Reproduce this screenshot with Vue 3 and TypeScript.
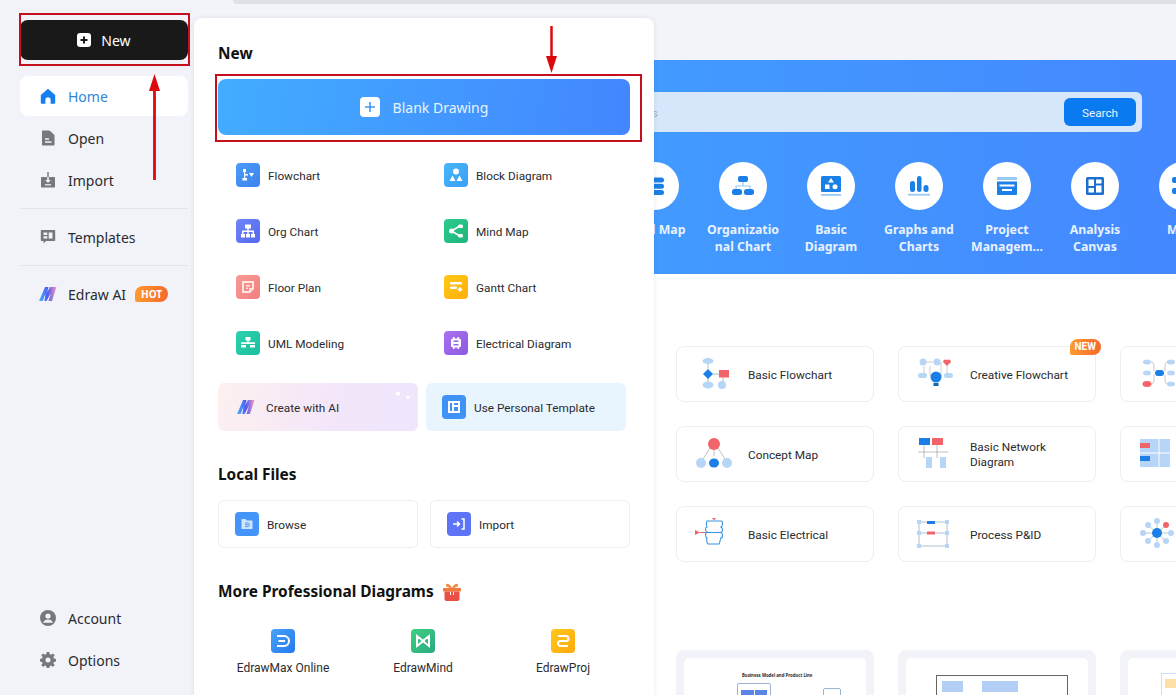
<template>
  <div class="page">
    <aside class="side">
      <button class="new-btn">
        <svg width="14" height="14" viewBox="0 0 14 14"><rect width="14" height="14" rx="3" fill="#fff" /><path d="M7 3.500v7M3.500 7h7" stroke="#191919" stroke-width="2" /></svg>
        New
      </button>
      <nav class="nav">
        <div class="nav-item active">
          <svg width="16" height="16" viewBox="0 0 16 16"><path d="M8 .8 15.200 7v8a.8.8 0 0 1-.8.8H10.600v-4a2.600 2.600 0 0 0-5.200 0v4H1.600a.8.8 0 0 1-.8-.8V7z" fill="#1480f0" /></svg>
          Home
        </div>
        <div class="nav-item">
          <svg width="16" height="16" viewBox="0 0 16 16"><path d="M2 1.500C2 .9 2.400.5 3 .5h6.500L14.500 5v9.500c0 .6-.4 1-1 1H3c-.6 0-1-.4-1-1z" fill="#77787d" /><path d="M5 9h4M5 12h6.500" stroke="#f1f3f9" stroke-width="1.400" /></svg>
          Open
        </div>
        <div class="nav-item">
          <svg width="16" height="16" viewBox="0 0 16 16"><path d="M1 6c0-.6.4-1 1-1h12c.6 0 1 .4 1 1v8.500c0 .6-.4 1-1 1H2c-.6 0-1-.4-1-1z" fill="#77787d" /><path d="M7.200 5h1.600v3h2L8 11 5.200 8h2z" fill="#f1f3f9" /><path d="M7.300 0h1.400v5H7.300z" fill="#77787d" /><path d="M5 12.800h6" stroke="#f1f3f9" stroke-width="1.200" /></svg>
          Import
        </div>
        <hr class="rule" />
        <div class="nav-item">
          <svg width="16" height="16" viewBox="0 0 16 16"><path d="M1.500 1h13c.4 0 .7.3.7.7v9.600c0 .4-.3.7-.7.7H6l-2.500 2.600V12h-2c-.4 0-.7-.3-.7-.7V1.700c0-.4.3-.7.7-.7z" fill="#77787d" /><path d="M3.500 3.500h3.800v2.600H3.500zM3.500 7.200h3.800v2.400H3.500zM8.700 3.500h3.800v6.100H8.700z" fill="#f1f3f9" /></svg>
          Templates
        </div>
        <hr class="rule" />
        <div class="nav-item ai-item">
          <svg width="18" height="16" viewBox="0 0 18 16"><defs><linearGradient id="aiSide" x1="0" x2="1"><stop offset="0" stop-color="#45b4ff" /><stop offset=".5" stop-color="#4f5cf2" /><stop offset="1" stop-color="#f89ac0" /></linearGradient></defs><path d="M0 15 6 1h3.600L8 6.500 11 1h6.500L13 15H9.500l2.500-8-4.500 8H5.300L6.500 7.500 3.600 15z" fill="url(#aiSide)" /></svg>
          <span>Edraw AI</span>
          <span class="hot">HOT</span>
        </div>
      </nav>
      <div class="side-bottom">
        <div class="nav-item">
          <svg width="16" height="16" viewBox="0 0 16 16"><circle cx="8" cy="8" r="8" fill="#77787d" /><circle cx="8" cy="6" r="2.600" fill="#f1f3f9" /><path d="M3.200 12.800c.6-2.200 2.600-3.200 4.800-3.200s4.200 1 4.800 3.200z" fill="#f1f3f9" /></svg>
          Account
        </div>
        <div class="nav-item">
          <svg width="16" height="16" viewBox="0 0 16 16"><path fill-rule="evenodd" d="M6.700 0h2.600l.4 2.200 1.300.6 1.900-1.300 1.800 1.800-1.300 1.900.6 1.300 2 .4v2.600l-2 .4-.6 1.300 1.300 1.900-1.800 1.800-1.900-1.300-1.300.6-.4 2.200H6.700l-.4-2.200-1.300-.6-1.900 1.300-1.800-1.800 1.300-1.900-.6-1.300-2-.4V6.900l2-.4.600-1.300L1.300 3.300l1.800-1.800L5 2.800l1.300-.6zM8 5.500a2.500 2.500 0 1 0 0 5 2.500 2.500 0 0 0 0-5z" fill="#77787d" /></svg>
          Options
        </div>
      </div>
    </aside>

    <main class="main">
      <div class="top"><div class="top-strip"></div></div>
      <section class="banner">
        <div class="search">
          <span class="placeholder">Search templates</span>
          <button class="search-btn">Search</button>
        </div>
        <div class="cats">
          <div v-for="c in categories" :key="c.name" class="cat">
            <div class="cat-circle">
              <svg width="24" height="24" viewBox="0 0 24 24" v-html="c.icon"></svg>
            </div>
            <div class="cat-name">{{ c.name }}</div>
          </div>
        </div>
      </section>

      <section class="cards">
        <div v-for="(card, i) in cards" :key="i" class="card">
          <svg class="card-icon" width="40" height="32" viewBox="0 0 40 32" v-html="card.icon"></svg>
          <span v-if="card.name">{{ card.name }}</span>
          <span v-if="card.isNew" class="new-tag">NEW</span>
        </div>
      </section>

      <section class="thumbs">
        <div class="thumb">
          <div class="thumb-in">
            <div class="thumb-title">Business Model and Product Line</div>
            <div class="thumb-row">
              <div class="thumb-group">
                <div class="blk-a"></div>
                <div class="blk-a"></div>
              </div>
              <div class="thumb-node"></div>
            </div>
          </div>
        </div>
        <div class="thumb">
          <div class="thumb-in">
            <div class="thumb-frame">
              <div class="blk-b"></div>
              <div class="blk-c"></div>
            </div>
          </div>
        </div>
        <div class="thumb">
          <div class="thumb-in">
            <div class="thumb-note"><div class="blk-d"></div></div>
          </div>
        </div>
      </section>
    </main>

    <div class="menu">
      <h3 class="menu-h first">New</h3>
      <div class="blank">
        <span class="blank-plus">
          <svg width="12" height="12" viewBox="0 0 12 12"><path d="M6 1v10M1 6h10" stroke="#3f97f8" stroke-width="1.600" /></svg>
        </span>
        Blank Drawing
      </div>

      <div class="types">
        <div v-for="t in types" :key="t.name" class="type">
          <span class="tile" :style="{ background: t.bg }">
            <svg width="16" height="16" viewBox="0 0 16 16" v-html="t.icon"></svg>
          </span>
          {{ t.name }}
        </div>
      </div>

      <div class="promo">
        <div class="promo-item ai">
          <svg class="ai-logo" width="18" height="16" viewBox="0 0 18 16"><defs><linearGradient id="aiPromo" x1="0" x2="1"><stop offset="0" stop-color="#45b4ff" /><stop offset=".5" stop-color="#4f5cf2" /><stop offset="1" stop-color="#f89ac0" /></linearGradient></defs><path d="M0 15 6 1h3.600L8 6.500 11 1h6.500L13 15H9.500l2.500-8-4.500 8H5.300L6.500 7.500 3.600 15z" fill="url(#aiPromo)" /></svg>
          Create with AI
        </div>
        <div class="promo-item tpl">
          <span class="tile" style="background: #4093f5">
            <svg width="14" height="14" viewBox="0 0 14 14"><path fill-rule="evenodd" d="M1 1h12v12H1zM3 3v8h2V3zM7 3v2h4V3zM7 7v4h4V7z" fill="#fff" /></svg>
          </span>
          Use Personal Template
        </div>
      </div>

      <h3 class="menu-h local-h">Local Files</h3>
      <div class="local">
        <div class="local-item">
          <span class="tile" style="background: #4495f9">
            <svg width="14" height="14" viewBox="0 0 14 14"><path d="M1.500 2h4l1.500 1.500h5.500V12h-11z" fill="#cfe4fd" /><path d="M5 6h2.500a1.800 1.800 0 0 1 0 3.600H5M5 7.800h3" fill="none" stroke="#4495f9" stroke-width="1" /></svg>
          </span>
          Browse
        </div>
        <div class="local-item">
          <span class="tile" style="background: #5c74f5">
            <svg width="14" height="14" viewBox="0 0 14 14"><path d="M1 7h6M5 4.500 7.500 7 5 9.500" fill="none" stroke="#fff" stroke-width="1.500" /><path d="M9.500 2H12v10H9.500" fill="none" stroke="#fff" stroke-width="1.500" /></svg>
          </span>
          Import
        </div>
      </div>

      <h3 class="menu-h more">
        More Professional Diagrams
        <svg width="18" height="18" viewBox="0 0 18 18"><path d="M9 5C7 1 4 0 3 1.500S5 5 9 5c4 0 7-2 6-3.500S11 1 9 5z" fill="#f58a42" /><rect x="0" y="5" width="18" height="3.500" rx="1" fill="#f2793b" /><path d="M1.500 8.500h15V16a2 2 0 0 1-2 2h-11a2 2 0 0 1-2-2z" fill="#ea5044" /><path d="M7.500 9v3M10.500 9v3" stroke="#fff" stroke-width="1" /></svg>
      </h3>
      <div class="products">
        <div class="product">
          <span class="tile prod-max">
            <svg width="16" height="16" viewBox="0 0 16 16"><path d="M2 3h7a5 5 0 0 1 0 10H2M3.500 8H10" fill="none" stroke="#fff" stroke-width="2" /></svg>
          </span>
          EdrawMax Online
        </div>
        <div class="product">
          <span class="tile prod-mind">
            <svg width="16" height="16" viewBox="0 0 16 16"><path d="M2 3v10l5-4V7zM14 3v10L9 9V7z" fill="none" stroke="#fff" stroke-width="2" /></svg>
          </span>
          EdrawMind
        </div>
        <div class="product">
          <span class="tile prod-proj">
            <svg width="16" height="16" viewBox="0 0 16 16"><path d="M3 3h8a2.500 2.500 0 0 1 0 5H5.500a2.500 2.500 0 0 0 0 5H13" fill="none" stroke="#fff" stroke-width="2" /></svg>
          </span>
          EdrawProj
        </div>
      </div>
    </div>

    <!-- red annotations drawn over the screenshot -->
    <div class="mark mark-new"></div>
    <div class="mark mark-blank"></div>
    <svg class="arrows" width="1176" height="695" viewBox="0 0 1176 695">
      <path d="M154.500 180V90" stroke="#dc0a0a" stroke-width="2.800" />
      <path d="M149 91h11L154.500 74z" fill="#dc0a0a" />
      <path d="M551.500 26v32" stroke="#dc0a0a" stroke-width="2.500" />
      <path d="M546 56h11L551.500 73z" fill="#dc0a0a" />
    </svg>
  </div>
</template>

<script setup lang="ts">
interface MenuType {
  name: string
  bg: string
  icon: string
}

interface Card {
  name?: string
  icon: string
  isNew?: boolean
}

const white = 'fill="#fff"'

const types: MenuType[] = [
  { name: 'Flowchart', bg: 'linear-gradient(135deg,#4b9cf7,#3d83ee)', icon: `<path ${white} d="M3 2h3v3H5.200v2H8v1.500H5.200V11H7v2.500H2.500V11H4V5H3zM9 6h5l-2.500 4z"/>` },
  { name: 'Block Diagram', bg: 'linear-gradient(135deg,#48b5fa,#3aa0f5)', icon: `<circle ${white} cx="8" cy="4.500" r="3"/><path ${white} d="M4.500 8.500l3 5.500h-6zM11.500 8.500l3 5.500h-6z"/>` },
  { name: 'Org Chart', bg: 'linear-gradient(135deg,#6f86f7,#5469ee)', icon: `<path ${white} d="M5 1.500h6v4H8.700V7.500H14V11h1v3.500h-4V11h1.500V9H8.700v2H10v3.500H6V11h1.300V9H3.500v2H5v3.500H1V11h1V7.500h5.300V5.500H5z"/>` },
  { name: 'Mind Map', bg: 'linear-gradient(135deg,#2ccb8c,#1fb57b)', icon: `<circle ${white} cx="3.500" cy="8" r="2.500"/><path d="M3.500 8L11 3.500M3.500 8L11 12.500" stroke="#fff" stroke-width="1.500"/><rect ${white} x="10" y="1.500" width="5" height="3.500" rx="1.500"/><rect ${white} x="10" y="11" width="5" height="3.500" rx="1.500"/>` },
  { name: 'Floor Plan', bg: 'linear-gradient(135deg,#f79a94,#f27f7f)', icon: `<path fill="#fde5e0" fill-rule="evenodd" d="M2 2h12v8l-4 4H2zM4 4v8h5v-3h3V4zM6 6h4v1.500H6zM6 8.500h2V10H6z"/>` },
  { name: 'Gantt Chart', bg: 'linear-gradient(135deg,#ffc918,#ffae0b)', icon: `<rect ${white} x="2" y="3" width="12" height="2.600" rx="1"/><rect ${white} x="2" y="7.500" width="7" height="2.600" rx="1"/><path ${white} d="M12 8l2.500 2.500L12 13l-2.500-2.500z"/>` },
  { name: 'UML Modeling', bg: 'linear-gradient(135deg,#2cd1ae,#1bbf9f)', icon: `<path ${white} d="M5.500 2h5v3.500H8.600V7.300H15V9H1V7.300h6.400V5.500H5.500zM1 10h5v2.500H1zM10 10h5v2.500h-5z"/>` },
  { name: 'Electrical Diagram', bg: 'linear-gradient(135deg,#a871ee,#8d5ae0)', icon: `<path ${white} d="M5 2h1.500v1.500h3V2H11v1.500c1.200 0 2 .8 2 2v5c0 1.200-.8 2-2 2V14H9.500v-1.500h-3V14H5v-1.500c-1.200 0-2-.8-2-2v-5c0-1.200.8-2 2-2z"/><rect x="5.500" y="5.500" width="5" height="1.500" fill="#9865e8"/><rect x="5.500" y="9" width="5" height="1.500" fill="#9865e8"/>` },
]

const categories = [
  { name: 'Mind Map', icon: `<rect x="3" y="3.500" width="18" height="5" rx="2.500" fill="#1a7fe6"/><rect x="3" y="9.800" width="18" height="5" rx="2.500" fill="#1a7fe6"/><rect x="3" y="16" width="18" height="5" rx="2.500" fill="#1a7fe6"/>` },
  { name: 'Organizatio nal Chart', icon: `<rect x="7" y="2" width="10" height="6" rx="2" fill="#1a7fe6"/><path d="M12 8v4M5 16v-4h14v4" fill="none" stroke="#9cc8f5" stroke-width="1.200"/><rect x="1" y="15" width="10" height="6" rx="2.500" fill="#1a7fe6"/><rect x="13" y="15" width="10" height="6" rx="2.500" fill="#1a7fe6"/>` },
  { name: 'Basic Diagram', icon: `<rect x="2" y="2" width="20" height="16" rx="1.500" fill="#1a7fe6"/><path d="M12 4l3 4.500H9z" fill="#fff"/><rect x="6" y="10.500" width="4.500" height="4.500" fill="#fff"/><circle cx="16" cy="12.800" r="2.500" fill="#fff"/><rect x="2" y="20" width="20" height="1.800" fill="#9cc8f5"/>` },
  { name: 'Graphs and Charts', icon: `<rect x="3" y="7" width="5" height="11" rx="2.500" fill="#1a7fe6"/><rect x="10" y="2" width="4.500" height="16" rx="2.250" fill="#1a7fe6"/><rect x="16.500" y="11" width="5" height="7" rx="2.500" fill="#1a7fe6"/><rect x="1" y="19.800" width="22" height="1.800" fill="#9cc8f5"/>` },
  { name: 'Project Managem...', icon: `<path d="M2 4c0-.6.4-1 1-1h18c.6 0 1 .4 1 1v2H2z" fill="#9cc8f5"/><path d="M2 7.500h20V20c0 .6-.4 1-1 1H3c-.6 0-1-.4-1-1z" fill="#1a7fe6"/><rect x="4.500" y="10.500" width="15" height="2" fill="#fff"/><rect x="7" y="15" width="10" height="2" fill="#fff"/>` },
  { name: 'Analysis Canvas', icon: `<rect x="3" y="3" width="18" height="18" rx="1.500" fill="#1a6fd0"/><rect x="5.500" y="5.500" width="5.500" height="6.500" fill="#fff"/><rect x="13" y="5.500" width="5.500" height="4" fill="#fff"/><rect x="5.500" y="14" width="5.500" height="4.500" fill="#fff"/><rect x="13" y="11.500" width="5.500" height="7" fill="#fff"/>` },
  { name: 'More', icon: `<rect x="1" y="3" width="10" height="6" rx="2" fill="#1a7fe6"/><rect x="1" y="14" width="10" height="6" rx="2" fill="#1a7fe6"/>` },
]

const lb = '#b7d5f7'
const bl = '#1a7fe6'
const rd = '#f0646a'

// the third column runs off the page, only its icons show
const cards: Card[] = [
  { name: 'Basic Flowchart', icon: `<ellipse cx="13" cy="3" rx="5.500" ry="3" fill="${lb}"/><path d="M13 6v5M13 20v5M18 16h6M28 19v5" stroke="#8aa" stroke-width=".7"/><path d="M13 11l5 5-5 5-5-5z" fill="${bl}"/><rect x="24" y="12" width="10" height="7.500" fill="${rd}"/><ellipse cx="13" cy="27" rx="5.500" ry="3.500" fill="${lb}"/><circle cx="27" cy="27" r="4" fill="${lb}"/>` },
  { name: 'Creative Flowchart', isNew: true, icon: `<circle cx="6" cy="4" r="3.500" fill="${lb}"/><circle cx="20" cy="4" r="3.500" fill="${lb}"/><path d="M30 8l-4-4a2.500 2.500 0 0 1 4-2 2.500 2.500 0 0 1 4 2z" fill="${rd}"/><path d="M9 4h7M7 8v8M13 8v10M24 4v14M30 8v8" fill="none" stroke="#aab" stroke-width=".6"/><rect x="1" y="15" width="9" height="5" rx="2.500" fill="${lb}"/><rect x="27" y="15" width="9" height="5" rx="2.500" fill="${lb}"/><circle cx="19" cy="19" r="5.500" fill="${bl}"/><rect x="16.500" y="25" width="5" height="3" fill="#1565b0"/>` },
  { icon: `<ellipse cx="8" cy="4" rx="4" ry="2.500" fill="${lb}"/><ellipse cx="8" cy="15" rx="4" ry="2.500" fill="${lb}"/><ellipse cx="8" cy="26" rx="4.500" ry="3" fill="${rd}"/><path d="M12 4c3 0 3 3 3 9M12 26c3 0 3-3 3-9" fill="none" stroke="#aab" stroke-width=".7"/><rect x="16" y="12" width="9" height="6" rx="3" fill="${bl}"/><path d="M29 4c-3 0-3 3-3 9M29 26c-3 0-3-3-3-9" fill="none" stroke="#aab" stroke-width=".7"/><ellipse cx="32" cy="4" rx="4" ry="2.500" fill="${lb}"/><ellipse cx="32" cy="15" rx="4" ry="2.500" fill="${lb}"/><ellipse cx="32" cy="26" rx="4" ry="2.500" fill="${lb}"/>` },
  { name: 'Concept Map', icon: `<circle cx="19" cy="6" r="6" fill="${rd}"/><path d="M15 10 8 21M19 12v6M23 10l7 11" stroke="#999" stroke-width=".6"/><circle cx="6" cy="25" r="5" fill="${lb}"/><ellipse cx="19" cy="25" rx="5" ry="4.500" fill="${bl}"/><circle cx="32" cy="25" r="5" fill="${lb}"/>` },
  { name: 'Basic Network Diagram', icon: `<rect x="2" y="0" width="11" height="7" fill="${bl}"/><rect x="15" y="0" width="11" height="7" fill="${rd}"/><path d="M1 14h30M7 7v13M20 7v13" stroke="#999" stroke-width=".6"/><rect x="9" y="19" width="6" height="11" fill="${lb}"/><rect x="23" y="19" width="6" height="11" fill="${lb}"/>` },
  { icon: `<rect x="1" y="1" width="30" height="28" fill="${lb}"/><path d="M20 1v28M1 15h30" stroke="#fff"/><rect x="1" y="5" width="10" height="5" fill="${rd}"/><rect x="1" y="18" width="10" height="5" fill="${bl}"/>` },
  { name: 'Basic Electrical', icon: `<path d="M12 3h14c2 0 2 5 0 6 2 1 2 5 0 5 2 1 2 6 0 6-1 1-1 5-2 6H13c-1-1-2-5-1-6-2-1-2-5 0-6-2-1-2-5 0-5-1-2-1-4 0-6z" fill="none" stroke="#3a94e0" stroke-width="1.100"/><path d="M11 14.500h16" stroke="#3a94e0" stroke-width="1.100"/><path d="M0 12v5l5-2.500z" fill="${rd}"/><path d="M5 14.500h6" stroke="${rd}"/><path d="M17 0h4l-2 2.500z" fill="${rd}"/>` },
  { name: 'Process P&ID', icon: `<path d="M2 4h28v24H2zM2 15h28" fill="none" stroke="#9fb0c4" stroke-width=".8"/><rect x="10" y="3" width="8" height="3" fill="${bl}"/><rect x="10" y="13.500" width="8" height="3" fill="${rd}"/><rect x="0" y="2" width="4" height="4" fill="${lb}"/><rect x="28" y="2" width="4" height="4" fill="${lb}"/><rect x="0" y="13" width="4" height="4" fill="${lb}"/><rect x="28" y="13" width="4" height="4" fill="${lb}"/><rect x="0" y="26" width="4" height="4" fill="${lb}"/><rect x="28" y="26" width="4" height="4" fill="${lb}"/>` },
  { icon: `<path d="M18 5v20M6 15h24M9 7l18 16M27 7L9 23" stroke="#8aa" stroke-width=".6"/><circle cx="18" cy="15" r="5" fill="${bl}"/><circle cx="18" cy="3" r="3" fill="${lb}"/><circle cx="9" cy="7" r="3" fill="${lb}"/><circle cx="27" cy="7" r="3" fill="${rd}"/><circle cx="4" cy="15" r="3" fill="${lb}"/><circle cx="32" cy="15" r="3" fill="${lb}"/><circle cx="9" cy="23" r="3" fill="${lb}"/><circle cx="27" cy="23" r="3" fill="${lb}"/><circle cx="18" cy="27" r="3" fill="${lb}"/>` },
]
</script>

<style>
html,
body {
  margin: 0;
  background: #fff;
}
</style>

<style scoped>
.page {
  position: relative;
  width: 1176px;
  height: 695px;
  overflow: hidden;
  display: flex;
  background: #fff;
  font-family: "Noto Sans", "Open Sans", sans-serif;
  color: #2b2b2e;
}
.side {
  width: 194px;
  flex: none;
  box-sizing: border-box;
  padding: 20px 6px 15px 20px;
  background: #f1f3f9;
  display: flex;
  flex-direction: column;
}
.new-btn {
  height: 40px;
  border: 0;
  border-radius: 8px;
  background: #191919;
  color: #fff;
  font: 14px "Noto Sans", sans-serif;
  display: flex;
  align-items: center;
  justify-content: center;
  gap: 10px;
}
.nav {
  margin-top: 16px;
  display: flex;
  flex-direction: column;
  gap: 2px;
}
.nav-item {
  height: 40px;
  padding-left: 20px;
  display: flex;
  align-items: center;
  gap: 12px;
  font-size: 14px;
  border-radius: 8px;
}
.nav-item.active {
  background: #fff;
  color: #2f86d8;
}
.nav-item.ai-item {
  padding-left: 19px;
  gap: 11px;
}
.rule {
  width: 100%;
  margin: 6px 0;
  border: 0;
  border-top: 1px solid #e2e4ea;
}
.hot {
  margin-left: -2px;
  padding: 0 6px;
  height: 16px;
  line-height: 16px;
  font-size: 10px;
  font-weight: 700;
  color: #fff;
  border-radius: 8px 8px 8px 2px;
  background: linear-gradient(90deg, #ff9a2e, #f5692b);
}
.side-bottom {
  margin-top: auto;
  display: flex;
  flex-direction: column;
  gap: 2px;
}
.main {
  flex: 1;
  min-width: 0;
}
.top {
  height: 60px;
  background: #f3f4f9;
}
.top-strip {
  height: 4px;
  margin-left: 39px;
  border-radius: 0 0 0 6px;
  background: #e0e1e5;
}
.banner {
  height: 214px;
  box-sizing: border-box;
  padding-top: 32px;
  background: linear-gradient(90deg, #3fa6ff 0, #429bff 45%, #4488ff 100%);
}
/* everything left of x=654 sits under the open menu, so it is not drawn */
.search {
  margin-left: 346px;
  width: 602px;
  height: 40px;
  box-sizing: border-box;
  padding: 0 6px 0 0;
  border-radius: 6px;
  background: #d7e7fb;
  display: flex;
  align-items: center;
  justify-content: space-between;
}
.placeholder {
  margin: 2px 0 0 26px;
  font: 11.800px Roboto, sans-serif;
  color: #a5adb8;
}
.search-btn {
  width: 72px;
  height: 28px;
  padding: 2px 0 0;
  border: 0;
  border-radius: 6px;
  background: #0a7af0;
  color: #e8f3ff;
  font: 11.800px Roboto, sans-serif;
}
.cats {
  margin-top: 30px;
  margin-left: 417px;
  display: flex;
}
.cat {
  width: 88px;
  flex: none;
  display: flex;
  flex-direction: column;
  align-items: center;
}
.cat-circle {
  width: 48px;
  height: 48px;
  border-radius: 50%;
  background: #fff;
  display: flex;
  align-items: center;
  justify-content: center;
}
.cat-name {
  width: 76px;
  margin-top: 11px;
  font-size: 12.300px;
  line-height: 17px;
  font-weight: 700;
  text-align: center;
  color: #e8f2ff;
  word-break: break-word;
}
.cards {
  margin-top: 72px;
  padding-left: 482px;
  display: grid;
  grid-template-columns: repeat(3, 198px);
  gap: 24px;
}
.card {
  position: relative;
  height: 56px;
  box-sizing: border-box;
  padding: 2px 14px 0 18px;
  border: 1px solid #eceef2;
  border-radius: 8px;
  background: #fff;
  display: flex;
  align-items: center;
  gap: 13px;
  font-family: Roboto, sans-serif;
  font-size: 11.800px;
  line-height: 15px;
  color: #2b2b2e;
}
.card-icon {
  flex: none;
  margin-top: -2px;
}
.new-tag {
  position: absolute;
  top: -8px;
  right: -6px;
  padding: 0 5px;
  height: 16px;
  line-height: 16px;
  font-size: 10px;
  font-weight: 700;
  color: #fff;
  border-radius: 8px 8px 8px 2px;
  background: linear-gradient(90deg, #ff9a2e, #f5692b);
}
.thumbs {
  margin-top: 88px;
  padding-left: 482px;
  display: grid;
  grid-template-columns: repeat(3, 198px);
  gap: 24px;
}
.thumb {
  height: 140px;
  box-sizing: border-box;
  padding: 8px;
  border-radius: 8px;
  background: #f1f3f9;
}
.thumb-in {
  height: 100%;
  padding-top: 14px;
  box-sizing: border-box;
  border-radius: 5px;
  background: #fff;
}
.thumb-title {
  font-size: 4.300px;
  line-height: 6px;
  font-weight: 700;
  margin-left: 58px;
  white-space: nowrap;
}
.thumb-row {
  margin: 5px 0 0 53px;
  display: flex;
  align-items: flex-start;
  gap: 52px;
}
.thumb-group {
  width: 34px;
  height: 20px;
  box-sizing: border-box;
  padding: 6px 3px;
  border: 1px solid #9db4d8;
  border-radius: 2px;
  display: flex;
  gap: 1px;
}
.thumb-node {
  width: 18px;
  height: 20px;
  margin-top: 5px;
  box-sizing: border-box;
  border: 1px solid #9db4d8;
  border-radius: 2px;
}
.blk-a {
  flex: 1;
  height: 5px;
  background: #5b86e8;
}
.thumb-frame {
  width: 132px;
  margin: 3px 0 0 30px;
  height: 60px;
  box-sizing: border-box;
  border: 1px solid #666;
  display: flex;
  gap: 19px;
  padding: 5px 5px;
}
.blk-b {
  width: 21px;
  height: 11px;
  background: #b4cff6;
}
.blk-c {
  width: 36px;
  height: 11px;
  background: #b4cff6;
}
.thumb-note {
  width: 60px;
  height: 40px;
  margin: 1px 0 0 33px;
  box-sizing: border-box;
  padding: 5px 3px;
  border: 1px solid #cfe0f2;
}
.blk-d {
  height: 9px;
  background: #fde0a8;
}
.menu {
  position: absolute;
  left: 194px;
  top: 18px;
  width: 460px;
  height: 700px;
  box-sizing: border-box;
  padding: 0 24px;
  border-radius: 8px 8px 0 0;
  background: #fff;
  box-shadow: 0 0 5px rgba(40, 50, 80, 0.1);
}
.menu-h {
  margin: 0;
  font-size: 15.400px;
  line-height: 20px;
  font-weight: 700;
  color: #111;
}
.menu-h.first {
  margin-top: 26px;
}
.blank {
  margin-top: 15px;
  height: 56px;
  width: 412px;
  border-radius: 8px;
  background: linear-gradient(100deg, #42adff, #4386ff);
  color: #e8f3ff;
  font-size: 14px;
  display: flex;
  align-items: center;
  justify-content: center;
  gap: 13px;
}
.blank-plus {
  width: 20px;
  height: 20px;
  border-radius: 4px;
  background: #fff;
  display: flex;
  align-items: center;
  justify-content: center;
}
.types {
  margin-top: 12px;
  display: grid;
  grid-template-columns: 208px 1fr;
  grid-auto-rows: 56px;
}
.type {
  padding: 2px 0 0 18px;
  display: flex;
  align-items: center;
  gap: 8px;
  font-family: Roboto, sans-serif;
  font-size: 11.800px;
}
.tile {
  width: 24px;
  height: 24px;
  flex: none;
  margin-top: -2px;
  border-radius: 4px;
  display: flex;
  align-items: center;
  justify-content: center;
}
.promo {
  margin-top: 12px;
  display: grid;
  grid-template-columns: 200px 200px;
  gap: 8px;
}
.promo-item {
  height: 48px;
  box-sizing: border-box;
  padding-top: 2px;
  border-radius: 6px;
  display: flex;
  align-items: center;
  font-family: Roboto, sans-serif;
  font-size: 11.800px;
}
.ai-logo {
  margin-top: -2px;
}
.promo-item.ai {
  padding-left: 19px;
  gap: 11px;
  background:
    radial-gradient(circle at 90% 22%, #fff 1.500px, transparent 2.500px),
    radial-gradient(circle at 95% 30%, #fff 1px, transparent 2px),
    linear-gradient(100deg, #fdf0f0, #f3e6fa 60%, #efe6fc);
}
.promo-item.tpl {
  padding-left: 16px;
  gap: 8px;
  background: #e8f4fe;
}
.menu-h.local-h {
  margin-top: 34px;
}
.local {
  margin-top: 15px;
  display: grid;
  grid-template-columns: 200px 200px;
  gap: 12px;
}
.local-item {
  height: 48px;
  box-sizing: border-box;
  padding: 2px 0 0 16px;
  border: 1px solid #eceef2;
  border-radius: 6px;
  display: flex;
  align-items: center;
  gap: 8px;
  font-family: Roboto, sans-serif;
  font-size: 11.800px;
}
.menu-h.more {
  margin-top: 34px;
  display: flex;
  align-items: center;
  gap: 9px;
}
.products {
  margin: 27px 0 0 -5px;
  display: grid;
  grid-template-columns: repeat(3, 140px);
}
.product {
  display: flex;
  flex-direction: column;
  align-items: center;
  gap: 8px;
  font-family: Roboto, sans-serif;
  font-size: 12px;
}
.product .tile {
  margin-top: 0;
}
.prod-max {
  background: linear-gradient(135deg, #47a4f9, #2478ee);
}
.prod-mind {
  background: linear-gradient(135deg, #3fd07f, #2aa982);
}
.prod-proj {
  background: linear-gradient(135deg, #ffc818, #ffa90f);
}
.mark {
  position: absolute;
  box-sizing: border-box;
  border: 2px solid #c4101c;
  pointer-events: none;
}
.mark-new {
  left: 19px;
  top: 13px;
  width: 171px;
  height: 53px;
}
.mark-blank {
  left: 215px;
  top: 74px;
  width: 427px;
  height: 68px;
}
.arrows {
  position: absolute;
  left: 0;
  top: 0;
  pointer-events: none;
}
</style>
